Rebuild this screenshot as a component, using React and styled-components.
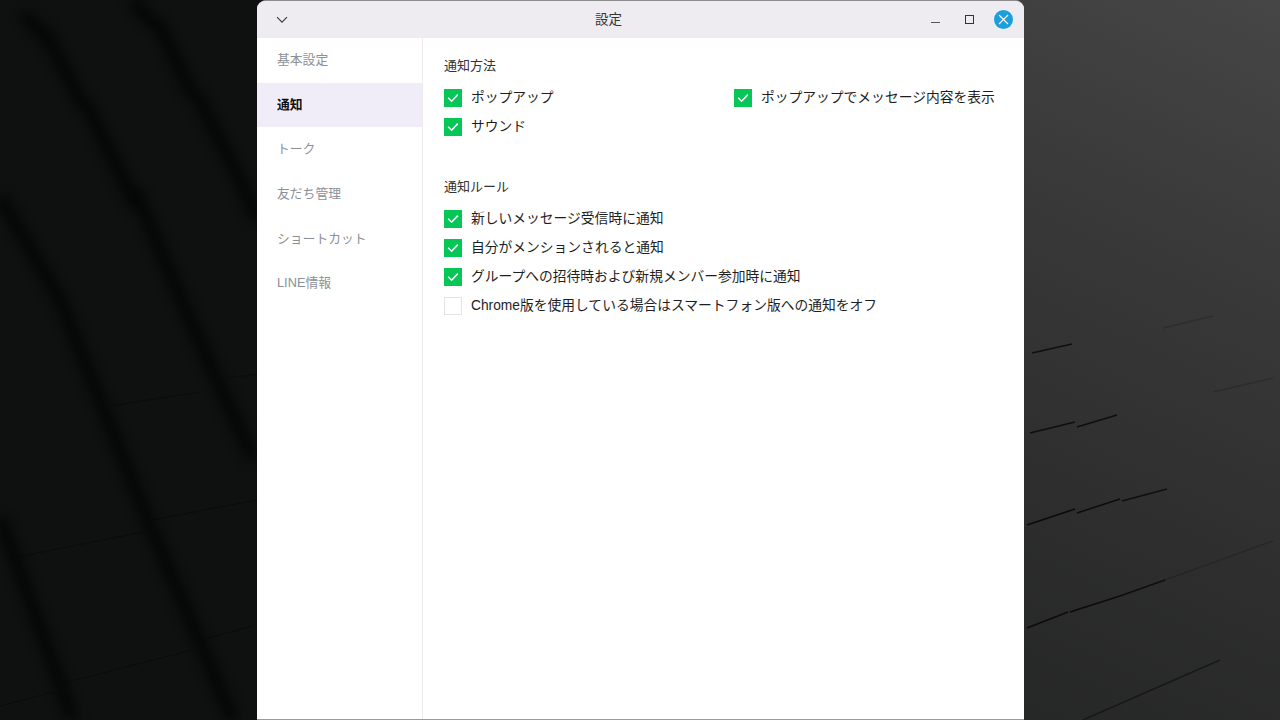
import React from "react";
import styled, { createGlobalStyle } from "styled-components";

const sideItems = ["基本設定", "通知", "トーク", "友だち管理", "ショートカット", "LINE情報"];

const methodItems = [
	{ label: "ポップアップ", checked: true },
	{ label: "ポップアップでメッセージ内容を表示", checked: true },
	{ label: "サウンド", checked: true },
];

const ruleItems = [
	{ label: "新しいメッセージ受信時に通知", checked: true },
	{ label: "自分がメンションされると通知", checked: true },
	{ label: "グループへの招待時および新規メンバー参加時に通知", checked: true },
	{ label: "Chrome版を使用している場合はスマートフォン版への通知をオフ", checked: false },
];

const shadowBands = [
	"M23 14 L42 34 L46 34 L80 100 L88 108 L133 200 L137 195 L190 320 L253 459",
	"M133 0 L150 22 L158 24 L190 90 L198 98 L240 180 L257 220",
	"M0 197 L60 300 L147 518 L233 720",
	"M0 518 L30 600 L73 720",
];

const leftCracks = [
	"M17 557 L143 532",
	"M152 520 L257 500",
	"M63 683 L197 649",
	"M200 640 L253 626",
	"M0 706 L53 692",
	"M227 378 L257 374",
	"M110 406 L200 392",
];

const rightCracks = [
	{ d: "M1032 353 L1072 344", o: 0.9 },
	{ d: "M1030 433 L1075 422", o: 0.9 },
	{ d: "M1077 427 L1117 415", o: 0.9 },
	{ d: "M1027 525 L1075 509", o: 1 },
	{ d: "M1077 513 L1120 499", o: 1 },
	{ d: "M1122 501 L1167 489", o: 0.9 },
	{ d: "M1027 628 L1068 612", o: 1 },
	{ d: "M1070 612 L1120 596", o: 1 },
	{ d: "M1120 596 L1165 580", o: 0.9 },
	{ d: "M1083 720 L1220 660", o: 0.6 },
	{ d: "M1165 580 L1273 541", o: 0.2 },
	{ d: "M1163 328 L1213 316", o: 0.2 },
	{ d: "M1213 392 L1273 378", o: 0.2 },
];

const Wallpaper = () => (
	<WallpaperSvg viewBox="0 0 1280 720" aria-hidden="true">
		<defs>
			<filter id="bandBlur" x="-30%" y="-30%" width="160%" height="160%">
				<feGaussianBlur stdDeviation="6" />
			</filter>
		</defs>
		<g filter="url(#bandBlur)" fill="none" stroke="#030404" strokeWidth="12" opacity="0.7">
			{shadowBands.map((d) => (
				<path key={d} d={d} />
			))}
		</g>
		<g fill="none" stroke="#070808" strokeWidth="1" opacity="0.6">
			{leftCracks.map((d) => (
				<path key={d} d={d} />
			))}
		</g>
		<g fill="none" stroke="#0b0b0b" strokeWidth="1.4">
			{rightCracks.map((c) => (
				<path key={c.d} d={c.d} opacity={c.o} />
			))}
		</g>
	</WallpaperSvg>
);

const Option = ({ label, checked }) => (
	<OptionRow>
		<CheckBox $checked={checked}>
			{checked && (
				<svg width="12" height="10" viewBox="0 0 12 10" fill="none">
					<path d="M1.2 4.8 L4.6 8.2 L10.8 1.6" stroke="#fff" strokeWidth="1.6" />
				</svg>
			)}
		</CheckBox>
		<OptionLabel>{label}</OptionLabel>
	</OptionRow>
);

const App = () => {
	return (
		<>
			<GlobalStyle />
			<Desktop>
				<Wallpaper />
				<SettingsWindow>
					<TitleBar>
						<TitleLeft>
							<svg width="12" height="8" viewBox="0 0 12 8" fill="none">
								<path d="M1 1.2 L6 6.2 L11 1.2" stroke="#3c3c40" strokeWidth="1.2" />
							</svg>
						</TitleLeft>
						<Title>設定</Title>
						<WindowControls>
							<MinimizeButton />
							<MaximizeButton />
							<CloseButton>
								<svg width="11" height="11" viewBox="0 0 11 11" fill="none">
									<path d="M1 1 L10 10 M10 1 L1 10" stroke="#fff" strokeWidth="1.1" />
								</svg>
							</CloseButton>
						</WindowControls>
					</TitleBar>
					<WindowBody>
						<Sidebar>
							{sideItems.map((item) => (
								<SideItem key={item} $active={item === "通知"}>
									{item}
								</SideItem>
							))}
						</Sidebar>
						<Content>
							<Section>
								<SectionTitle>通知方法</SectionTitle>
								<MethodGrid>
									{methodItems.map((item) => (
										<Option key={item.label} {...item} />
									))}
								</MethodGrid>
							</Section>
							<Section>
								<SectionTitle>通知ルール</SectionTitle>
								<RuleList>
									{ruleItems.map((item) => (
										<Option key={item.label} {...item} />
									))}
								</RuleList>
							</Section>
						</Content>
					</WindowBody>
				</SettingsWindow>
			</Desktop>
		</>
	);
};

export default App;

const GlobalStyle = createGlobalStyle`
	html, body {
		margin: 0;
		padding: 0;
		height: 100%;
		overflow: hidden;
	}

	body {
		font-family: "Liberation Sans", "Noto Sans CJK JP", sans-serif;
	}
`;

const Desktop = styled.div`
	position: relative;
	width: 1280px;
	height: 720px;
	overflow: hidden;
	display: flex;
	justify-content: center;
	padding-left: 1px;
	box-sizing: border-box;
	background:
		linear-gradient(to right, #0f1010 0, #0f1010 640px, transparent 640px),
		linear-gradient(205deg, #464646 0%, #383938 22%, #2d2e2d 45%, #232524 70%, #272827 100%);
`;

const WallpaperSvg = styled.svg`
	position: absolute;
	inset: 0;
	width: 1280px;
	height: 720px;
`;

const SettingsWindow = styled.div`
	position: relative;
	width: 767px;
	height: 720px;
	box-sizing: border-box;
	display: flex;
	flex-direction: column;
	background: #fff;
	border-radius: 9px 9px 0 0;
	border-top: 1px solid #8c8c8c;
	border-bottom: 1px solid #9a9a9a;
	overflow: hidden;
`;

const TitleBar = styled.div`
	height: 37px;
	flex-shrink: 0;
	display: grid;
	grid-template-columns: 338px auto 1fr;
	align-items: center;
	background: #eeecf0;
`;

const TitleLeft = styled.div`
	display: flex;
	align-items: center;
	padding-left: 19px;
`;

const Title = styled.div`
	font-size: 13.5px;
	padding-bottom: 4px;
	color: #333;
`;

const WindowControls = styled.div`
	display: flex;
	align-items: center;
	justify-content: flex-end;
	padding-right: 11px;
`;

const MinimizeButton = styled.div`
	width: 9px;
	height: 1px;
	margin-top: 5px;
	margin-right: 25px;
	background: #55555a;
`;

const MaximizeButton = styled.div`
	width: 7px;
	height: 7px;
	margin-right: 20px;
	border: 1px solid #333;
`;

const CloseButton = styled.div`
	width: 19px;
	height: 19px;
	border-radius: 50%;
	background: #1a9fdc;
	display: flex;
	align-items: center;
	justify-content: center;
`;

const WindowBody = styled.div`
	flex: 1;
	display: flex;
	min-height: 0;
`;

const Sidebar = styled.div`
	width: 165px;
	flex-shrink: 0;
	border-right: 1px solid #ecebee;
`;

const SideItem = styled.div`
	height: 44.7px;
	box-sizing: border-box;
	display: flex;
	align-items: center;
	padding: 0 0 4px 20px;
	font-size: 12.8px;
	font-weight: ${(props) => (props.$active ? 700 : 400)};
	color: ${(props) => (props.$active ? "#111" : "#8b9097")};
	background: ${(props) => (props.$active ? "#f0edf8" : "transparent")};
`;

const Content = styled.div`
	flex: 1;
	padding: 18px 0 0 21px;
	display: flex;
	flex-direction: column;
	gap: 41px;
`;

const Section = styled.div`
	display: flex;
	flex-direction: column;
`;

const SectionTitle = styled.div`
	height: 20px;
	line-height: 20px;
	margin-bottom: 13px;
	font-size: 13px;
	color: #333;
`;

const MethodGrid = styled.div`
	display: grid;
	grid-template-columns: 290px 1fr;
	row-gap: 11px;
`;

const RuleList = styled.div`
	display: flex;
	flex-direction: column;
	gap: 11px;
`;

const OptionRow = styled.div`
	height: 18px;
	display: flex;
	align-items: center;
	gap: 9px;
`;

const CheckBox = styled.div`
	width: 18px;
	height: 18px;
	flex-shrink: 0;
	box-sizing: border-box;
	display: flex;
	align-items: center;
	justify-content: center;
	background: ${(props) => (props.$checked ? "#06c755" : "#fff")};
	border: ${(props) => (props.$checked ? "none" : "1px solid #e3e3e6")};
`;

const OptionLabel = styled.div`
	font-size: 13.78px;
	line-height: 18px;
	color: #1e1e1e;
	white-space: nowrap;
`;
